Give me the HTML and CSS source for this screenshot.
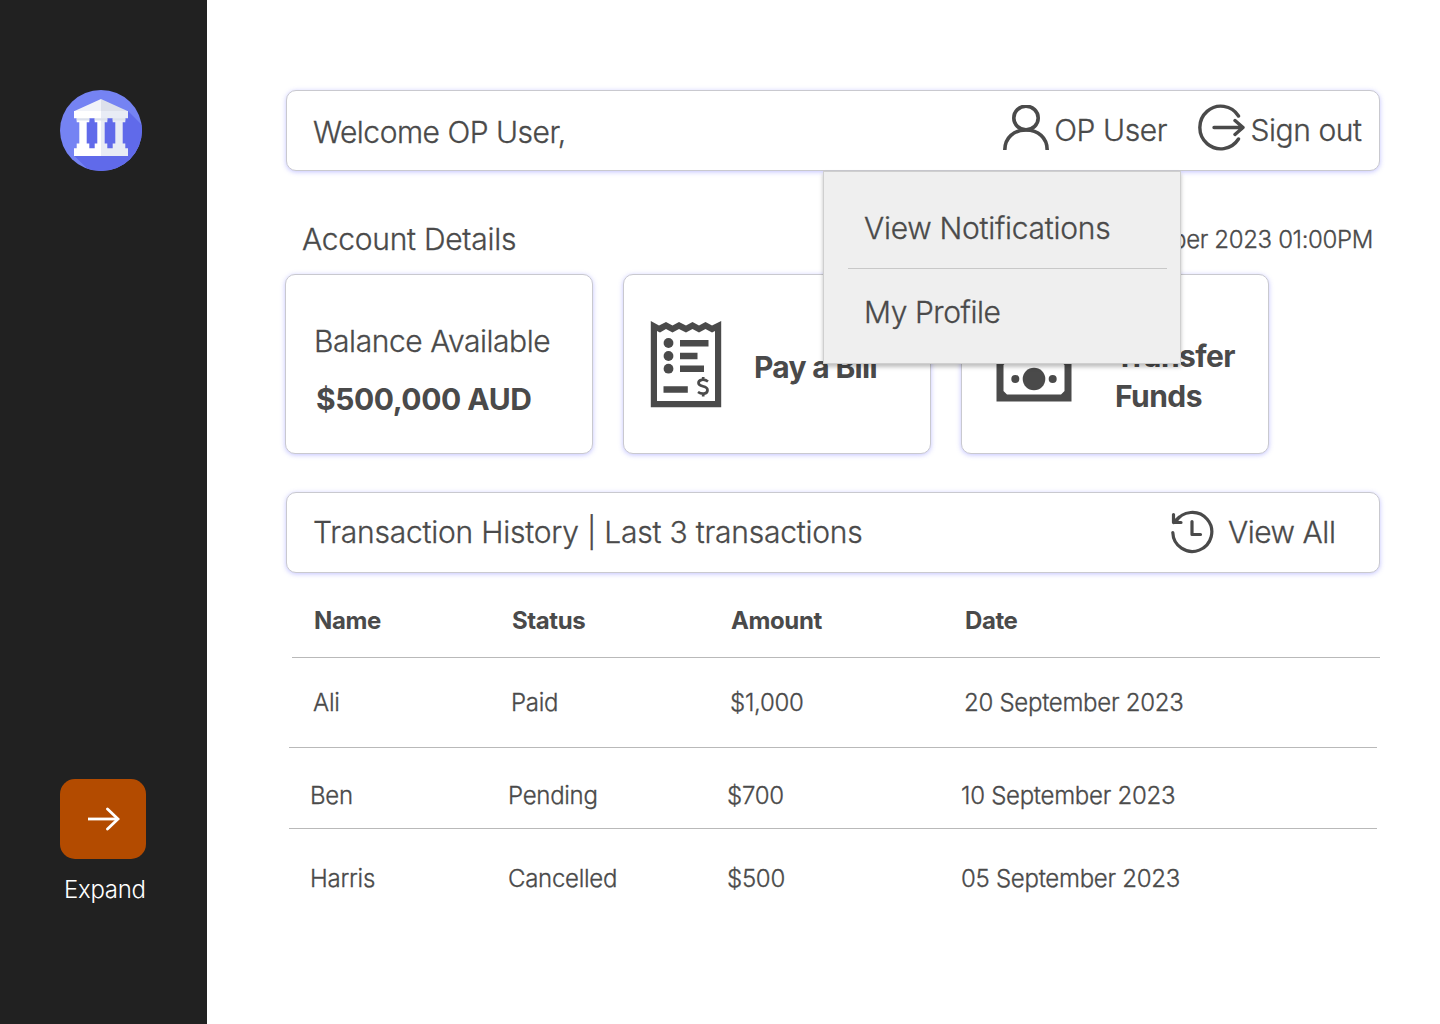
FILE: index.html
```html
<!DOCTYPE html>
<html lang="en">
<head>
<meta charset="utf-8">
<title>Account overview</title>
<link rel="stylesheet" href="styles.css">
</head>
<body>
<div class="app">
  <aside class="sidebar">
    <svg class="logo" viewBox="0 0 82 81" width="82" height="81">
      <defs><clipPath id="disc"><ellipse cx="41" cy="40.5" rx="41" ry="40.5"/></clipPath></defs>
      <g clip-path="url(#disc)">
        <rect width="82" height="81" fill="#7583f3"/>
        <path d="M68 21L90 43V90H38.500L14 65.500H23V28H68z" fill="#606aea"/>
      </g>
      <path d="M41 9L14 21.200H41z" fill="#f1f3f9"/>
      <path d="M41 9L68 21.200H41z" fill="#dde1eb"/>
      <path d="M14 21H41V66H14V58.300H16.700V53.500H19.300V32.300H16.700V28.300H14zM29.300 28.300V32.300H26.700V53.500H29.300V58.300H34.700V53.500H37.300V32.300H34.700V28.300z" fill="#fff" fill-rule="evenodd"/>
      <path d="M41 21H68V28.300H65.300V32.300H62.700V53.500H65.300V58.300H68V66H41zM47.300 28.300V32.300H44.700V53.500H47.300V58.300H52.700V53.500H55.300V32.300H52.700V28.300z" fill="#e8ecf5" fill-rule="evenodd"/>
      <path d="M16.700 28.300H29.300V30.500H16.700zM34.700 28.300H47.300V30.500H34.700zM52.700 28.300H65.300V30.500H52.700z" fill="#dce1ec"/>
    </svg>
    <div class="expand">
      <button class="expand-button" aria-label="Expand">
        <svg width="34" height="24" viewBox="0 0 34 24" fill="none" stroke="#fff" stroke-width="2.800"><path d="M2 12H32"/><path d="M21.500 2L32 12L21.500 22" stroke-linecap="round"/></svg>
      </button>
      <span class="expand-label">Expand</span>
    </div>
  </aside>
  <main class="content">
    <header class="panel topbar">
      <span class="welcome">Welcome OP User,</span>
      <div class="user">
        <svg width="46" height="46" viewBox="0 0 46 46" fill="none" stroke="#4a4a4a" stroke-width="3.600"><ellipse cx="23" cy="13" rx="12.200" ry="11.800"/><path d="M1.800 45C1.800 32.500 11 25 23 25S44.200 32.500 44.200 45"/></svg>
        <span class="user-name">OP User</span>
      </div>
      <div class="signout">
        <svg width="48" height="48" viewBox="0 0 48 48" fill="none" stroke="#4a4a4a" stroke-width="3.400" stroke-linecap="round"><path d="M41.500 12A21 21.300 0 1 0 41.500 35"/><path d="M17 23.500H46M38 16.500L46 23.500L38 30.500" stroke-linejoin="round"/></svg>
        <span class="signout-text">Sign out</span>
      </div>
      <nav class="menu">
        <a class="menu-item notifications">View Notifications</a>
        <a class="menu-item profile">My Profile</a>
      </nav>
    </header>
    <div class="section-head">
      <h2 class="section-title">Account Details</h2>
      <span class="timestamp">20 September 2023 01:00PM</span>
    </div>
    <section class="cards">
      <article class="panel card balance">
        <span class="balance-label">Balance Available</span>
        <strong class="balance-value">$500,000 AUD</strong>
      </article>
      <article class="panel card bill">
        <svg width="72" height="88" viewBox="0 0 72 88" fill="#4a4a4a">
          <path fill-rule="evenodd" d="M.8 1L9 5.500L16 2L22.500 5.500L29 2L36 5.500L42.500 2L49 5.500L55.500 2L62 5.500L71.200 1V87.300H.8zM7 11V81H65V11L62 12.500L55.500 9L49 12.500L42.500 9L36 12.500L29 9L22.500 12.500L16 9L10 12.500z"/>
          <circle cx="18.500" cy="23" r="4.900"/><circle cx="18.500" cy="36" r="4.900"/><circle cx="18.500" cy="48.700" r="4.900"/>
          <path d="M30 20h28.500v6.500H30zM30 32.700h17.500v6.500H30zM30 45.500h24v6.500H30zM13.500 66.300h24.300v6.500H13.500z"/>
          <path d="M58 61.500C54 58.500 48.500 59.500 48.500 63C48.500 67.500 57.500 65 57.500 70C57.500 74.500 51.500 74.500 48 72M53.200 57V61M53.200 73.500V76.500" fill="none" stroke="#4a4a4a" stroke-width="2.700"/>
        </svg>
        <strong class="card-label">Pay a Bill</strong>
      </article>
      <article class="panel card transfer">
        <svg width="76" height="76" viewBox="0 0 76 76" fill="#4a4a4a">
          <path fill-rule="evenodd" d="M.5 28H75.500V75.500H.5zM11 35.500L7.500 39V65L11 68.500H65L68.500 65V39L65 35.500z"/>
          <circle cx="38" cy="53" r="11.300"/><circle cx="19.300" cy="53" r="4"/><circle cx="56.700" cy="53" r="4"/>
        </svg>
        <strong class="card-label">Transfer Funds</strong>
      </article>
    </section>
    <section class="panel history">
      <h2 class="history-title">Transaction History | Last 3 transactions</h2>
      <div class="view-all">
        <svg width="44" height="44" viewBox="0 0 44 44" fill="none" stroke="#4a4a4a" stroke-width="3.200" stroke-linecap="round" stroke-linejoin="round"><path d="M2.800 22.500A19.500 19.500 0 1 0 5.500 12"/><path d="M3.500 4.500V12.500H11M3.500 12.500L9 7.300"/><path d="M22 11.500V24.500H30.500"/></svg>
        <span class="view-all-text">View All</span>
      </div>
    </section>
    <section class="table">
      <div class="row head"><span>Name</span><span>Status</span><span>Amount</span><span>Date</span></div>
      <div class="row first"><span>Ali</span><span>Paid</span><span>$1,000</span><span>20 September 2023</span></div>
      <div class="row second"><span>Ben</span><span>Pending</span><span>$700</span><span>10 September 2023</span></div>
      <div class="row third"><span>Harris</span><span>Cancelled</span><span>$500</span><span>05 September 2023</span></div>
    </section>
  </main>
</div>
</body>
</html>
```
FILE: styles.css
```css
* { box-sizing: border-box; }
body { margin: 0; background: #fff; color: #4a4a4a; font: 300 30px/40px Inter, sans-serif; letter-spacing: -.44px; -webkit-text-stroke: .3px currentColor; }
h2 { margin: 0; font-size: 30px; font-weight: 300; }
strong { font-weight: 700; -webkit-text-stroke: 0; }
svg { display: block; flex: none; }
span, h2, a, strong { white-space: nowrap; }
.app { display: flex; height: 1024px; overflow: hidden; }
.sidebar { width: 207px; flex: none; background: #212121; padding: 90px 0 114px 60px; display: flex; flex-direction: column; justify-content: space-between; }
.expand { display: flex; flex-direction: column; gap: 11px; }
.expand-button { width: 86px; height: 80px; border: 0; border-radius: 15px; background: #b34b00; display: flex; align-items: center; justify-content: center; padding: 0; }
.expand-label { color: #fff; font-size: 24px; padding-left: 4px; letter-spacing: -.3px; -webkit-text-stroke: 0; }
.content { flex: 1; padding: 90px 60px 0 79px; }
.panel { background: #fff; border: 1px solid #c9c9cf; border-radius: 10px; box-shadow: 0 1px 5px rgba(90, 90, 255, .36); }
.topbar { position: relative; height: 81px; display: flex; align-items: center; padding: 0 17.500px 0 26px; }
.welcome { flex: 1; padding-top: 3px; letter-spacing: -.5px; }
.user, .signout { display: flex; align-items: center; margin-top: -5px; }
.user { gap: 5px; margin-right: 30px; }
.signout { gap: 5.500px; }
.user-name, .signout-text { padding-top: 4px; }
.menu { position: absolute; z-index: 2; top: 80px; right: 198px; width: 358px; height: 193px; background: #efefef; border: 1px solid #cfcfcf; box-shadow: 0 3px 4px rgba(0, 0, 0, .25); padding: 36px 13px 0 24px; }
.menu-item { display: block; padding-left: 16px; }
.notifications { height: 61px; border-bottom: 1px solid #c8c8c8; letter-spacing: -.27px; }
.profile { padding-top: 23px; }
.section-head { height: 103px; display: flex; align-items: center; justify-content: space-between; padding: 0 7px 0 16px; }
.section-title { margin-top: 33px; letter-spacing: -.27px; }
.timestamp { font-size: 24px; margin-top: 35px; letter-spacing: -.36px; }
.cards { display: grid; grid-template-columns: repeat(3, 308px); gap: 30px; margin-left: -1px; }
.card { height: 180px; display: flex; }
.balance { flex-direction: column; gap: 18px; padding: 46px 0 0 28px; }
.balance-value { padding-left: 2px; }
.bill { padding: 45px 0 0 26px; gap: 32px; }
.bill .card-label { padding-top: 27px; letter-spacing: -.7px; }
.transfer { padding: 51px 0 0 34px; gap: 43px; }
.transfer .card-label { width: 124px; white-space: normal; padding-top: 10px; letter-spacing: -.55px; }
.history { margin-top: 38px; height: 81px; display: flex; align-items: center; justify-content: space-between; padding: 0 43.500px 2px 26px; }
.history-title { letter-spacing: -.22px; }
.view-all { display: flex; align-items: center; gap: 14px; }
.table { font-size: 24px; letter-spacing: -.28px; }
.row { display: grid; grid-template-columns: 198px 219px 234px 1fr; align-items: start; width: 1088px; border-bottom: 1px solid #b9b9b9; margin-left: 3px; padding-left: 21px; }
.head { font-weight: 700; height: 85px; padding-top: 28px; margin-left: 6px; padding-left: 22px; letter-spacing: -.4px; -webkit-text-stroke: 0; }
.first { height: 90px; padding-top: 25px; padding-left: 24px; }
.second { height: 81px; padding-top: 28px; }
.third { border: 0; padding-top: 30px; }
```
